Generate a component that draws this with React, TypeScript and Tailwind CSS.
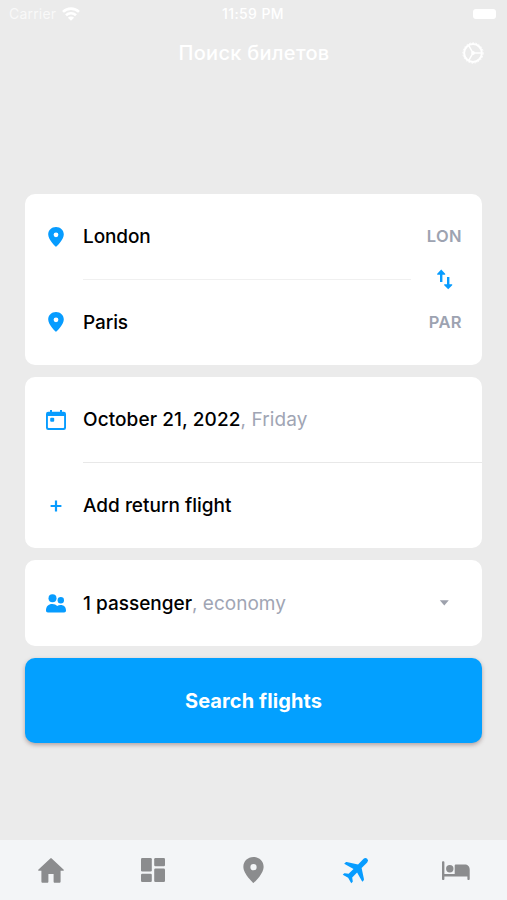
import type { ReactNode } from "react";

const blue = "text-[#079cff]";

function PinIcon({ className }: { className: string }) {
  return (
    <svg viewBox="0 0 16 20" fill="currentColor" className={className}>
      <path d="M8 0C3.5 0 .2 3.3.2 7.6.2 13 8 20 8 20s7.8-7 7.8-12.4C15.8 3.3 12.5 0 8 0zm0 10.2a2.4 2.4 0 1 1 0-4.8 2.4 2.4 0 0 1 0 4.8z" />
    </svg>
  );
}

function WifiIcon() {
  return (
    <svg viewBox="0 0 18 14" className="ml-[6px] h-[14px] w-[18px]" fill="none" stroke="white" strokeWidth="2.6">
      <path d="M1 4.9a11.5 11.5 0 0 1 16 0" />
      <path d="M4 8.3a7.2 7.2 0 0 1 10 0" />
      <path d="M9 13.8 5.9 10.7a4.4 4.4 0 0 1 6.2 0z" fill="white" stroke="none" />
    </svg>
  );
}

function SettingsIcon() {
  return (
    <svg viewBox="0 0 22 22" className="h-[22px] w-[22px]" fill="none" stroke="white">
      <circle cx="11" cy="11" r="8.9" strokeWidth="2" />
      <circle cx="11" cy="11" r="10.2" strokeWidth="1" strokeDasharray="1.7 1.44" />
      <circle cx="11" cy="11" r="1.9" fill="white" stroke="none" />
      <path d="M11 11h8.5M11 11 6.8 3.6M11 11l-4.2 7.4" strokeWidth="1.5" />
    </svg>
  );
}

function CalendarIcon() {
  return (
    <svg viewBox="0 0 20 20" className="h-5 w-5" fill="currentColor">
      <path
        fillRule="evenodd"
        d="M4 0h2v1.7h8V0h2v1.7h1.6A2.3 2.3 0 0 1 20 4v13.7a2.3 2.3 0 0 1-2.3 2.3H2.3A2.3 2.3 0 0 1 0 17.7V4a2.3 2.3 0 0 1 2.4-2.3H4zM1.9 6v11.3c0 .5.3.8.8.8h14.6c.5 0 .8-.3.8-.8V6z"
      />
      <rect x="4.2" y="7.8" width="4" height="4" rx="1" />
    </svg>
  );
}

function PlusIcon() {
  return (
    <svg viewBox="0 0 12 12" className="h-3 w-3" fill="none" stroke="currentColor" strokeWidth="2.2">
      <path d="M6 .6v10.8M.6 6h10.8" />
    </svg>
  );
}

function PeopleIcon() {
  return (
    <svg viewBox="0 0 20 19" className="h-[19px] w-5" fill="currentColor">
      <circle cx="6.5" cy="4.2" r="4" />
      <circle cx="14.8" cy="6.3" r="3.2" />
      <path d="M0 16.6c0-4.3 2.5-6.6 6.2-6.6 2.2 0 3.9.8 5 2.1.9-.8 2-1.2 3.4-1.2 3.4 0 5.4 2.1 5.4 5.7 0 1.2-.7 1.9-1.9 1.9H1.9C.7 18.5 0 17.8 0 16.6z" />
    </svg>
  );
}

function SwapIcon() {
  return (
    <svg viewBox="0 0 16 21" className="h-[21px] w-4" fill="currentColor">
      <path d="M4.2.6 8.2 4.7v1H5.4v7.3H3V5.7H.2v-1z" />
      <path d="M11.2 20.3 7.2 16.2v-1H10V7.9h2.4v7.3h2.8v1z" />
    </svg>
  );
}

function HomeIcon() {
  return (
    <svg viewBox="0 0 26 25" className="h-[25px] w-[26px]" fill="currentColor">
      <path d="M12.3.4a1 1 0 0 1 1.4 0L25.5 11.6c.6.6.3 1.2-.5 1.2h-2.4v10.7c0 .8-.5 1.3-1.3 1.3h-4.5c-.8 0-1.2-.5-1.2-1.3v-7.6h-5.2v7.6c0 .8-.4 1.3-1.2 1.3H4.7c-.8 0-1.3-.5-1.3-1.3V12.8H1c-.8 0-1.1-.6-.5-1.2z" />
    </svg>
  );
}

function DashboardIcon() {
  return (
    <svg viewBox="0 0 24 24" className="ml-px h-6 w-6" fill="currentColor">
      <rect x="0" y="0" width="10.8" height="13.4" rx="1.2" />
      <rect x="0" y="15.8" width="10.8" height="8.2" rx="1.2" />
      <rect x="13.2" y="0" width="10.8" height="8.2" rx="1.2" />
      <rect x="13.2" y="10.6" width="10.8" height="13.4" rx="1.2" />
    </svg>
  );
}

function PlaneIcon() {
  return (
    <svg viewBox="0 0 24 24" className="mb-[3px] ml-1 h-[32px] w-[32px] rotate-45" fill="currentColor">
      <path d="M21.6 16v-1.4c0-.3-.2-.6-.4-.8L13.9 9V3.1a1.9 1.9 0 0 0-3.8 0V9l-7.3 4.8c-.2.2-.4.5-.4.8V16l7.7-2.2V19l-2.3 1.7c-.2.2-.3.3-.3.6v1.3L12 21.4l4.5 1.2v-1.3c0-.3-.1-.4-.3-.6L13.9 19v-5.2z" />
    </svg>
  );
}

function BedIcon() {
  return (
    <svg viewBox="0 0 28 20" className="mt-[2px] h-5 w-7" fill="currentColor">
      <path d="M0 1.3C0 .6.5.3 1.2.3s1.2.3 1.2 1V13h10.3V4.8c0-.9.5-1.4 1.4-1.4h8.6c3 0 5 2 5 5v9.7c0 .7-.5 1-1.2 1s-1.1-.3-1.1-1v-2.6h-23v2.6c0 .7-.5 1-1.2 1s-1.2-.3-1.2-1z" />
      <circle cx="7.8" cy="7.8" r="3.7" />
    </svg>
  );
}

function Row({ icon, children }: { icon: ReactNode; children: ReactNode }) {
  return (
    <div className="flex h-[85.5px] items-center pt-px pr-5">
      <span className={`flex w-[58px] shrink-0 items-center justify-center pl-[3px] ${blue}`}>
        {icon}
      </span>
      {children}
    </div>
  );
}

const label = "pt-px text-[19px] font-medium text-black";
const hint = "font-normal text-[#a0a5b4]";
const code = "ml-auto text-[16.5px] font-semibold tracking-[0.4px] text-[#9da3b1]";

export default function App() {
  return (
    <div className="flex h-[900px] w-[507px] flex-col overflow-hidden bg-[#ebebeb] font-['Inter',sans-serif]">
      <header className="text-white">
        <div className="grid h-[27px] grid-cols-3 items-center pr-[11px] pl-[9px] text-[14px]">
          <div className="flex items-center">
            <span className="tracking-[0.2px] opacity-70">Carrier</span>
            <WifiIcon />
          </div>
          <span className="pl-px text-center font-medium tracking-[0.4px]">11:59 PM</span>
          <span className="h-[10px] w-[23px] justify-self-end rounded-[3px] bg-white" />
        </div>
        <div className="grid h-[52px] grid-cols-[1fr_auto_1fr] items-center px-[23px]">
          <span />
          <h1 className="pl-px text-[20px] font-medium tracking-[0.3px]">Поиск билетов</h1>
          <button className="justify-self-end">
            <SettingsIcon />
          </button>
        </div>
      </header>

      <main className="mt-[114.6px] flex flex-1 flex-col gap-[12.3px] px-[25px]">
        <section className="relative rounded-[10px] bg-white">
          <Row icon={<PinIcon className="h-5 w-4" />}>
            <span className={`${label} tracking-[-0.1px]`}>London</span>
            <span className={code}>LON</span>
          </Row>
          <div className="absolute top-[85px] left-[58px] h-px w-[328px] bg-[#f0f0f0]" />
          <button className={`absolute top-[75px] right-[29px] ${blue}`}>
            <SwapIcon />
          </button>
          <Row icon={<PinIcon className="h-5 w-4" />}>
            <span className={`${label} tracking-[-0.1px]`}>Paris</span>
            <span className={code}>PAR</span>
          </Row>
        </section>

        <section className="relative rounded-[10px] bg-white">
          <Row icon={<CalendarIcon />}>
            <span className={`${label} tracking-[0.08px]`}>
              October 21, 2022<span className={hint}>, Friday</span>
            </span>
          </Row>
          <div className="absolute top-[85px] right-0 left-[58px] h-px bg-[#e8e8e8]" />
          <Row icon={<PlusIcon />}>
            <span className={label}>Add return flight</span>
          </Row>
        </section>

        <section className="rounded-[10px] bg-white">
          <Row icon={<PeopleIcon />}>
            <span className={label}>
              1 passenger<span className={hint}>, economy</span>
            </span>
            <svg viewBox="0 0 10 6" className="mr-[13px] ml-auto h-[6px] w-[10px]" fill="#9da1ac">
              <path d="M.8.3h9L5.3 5.5z" />
            </svg>
          </Row>
        </section>

        <button className="h-[85.5px] rounded-[10px] bg-[#03a0ff] text-[20px] font-bold tracking-[0.1px] text-white shadow-[0_2px_4px_rgba(70,30,30,0.35)]">
          Search flights
        </button>
      </main>

      <nav className="grid h-[60px] grid-cols-5 place-items-center bg-[#f3f5f7] text-[#8b8c8e]">
        <HomeIcon />
        <DashboardIcon />
        <PinIcon className="h-[26px] w-[21px]" />
        <span className={blue}>
          <PlaneIcon />
        </span>
        <BedIcon />
      </nav>
    </div>
  );
}
